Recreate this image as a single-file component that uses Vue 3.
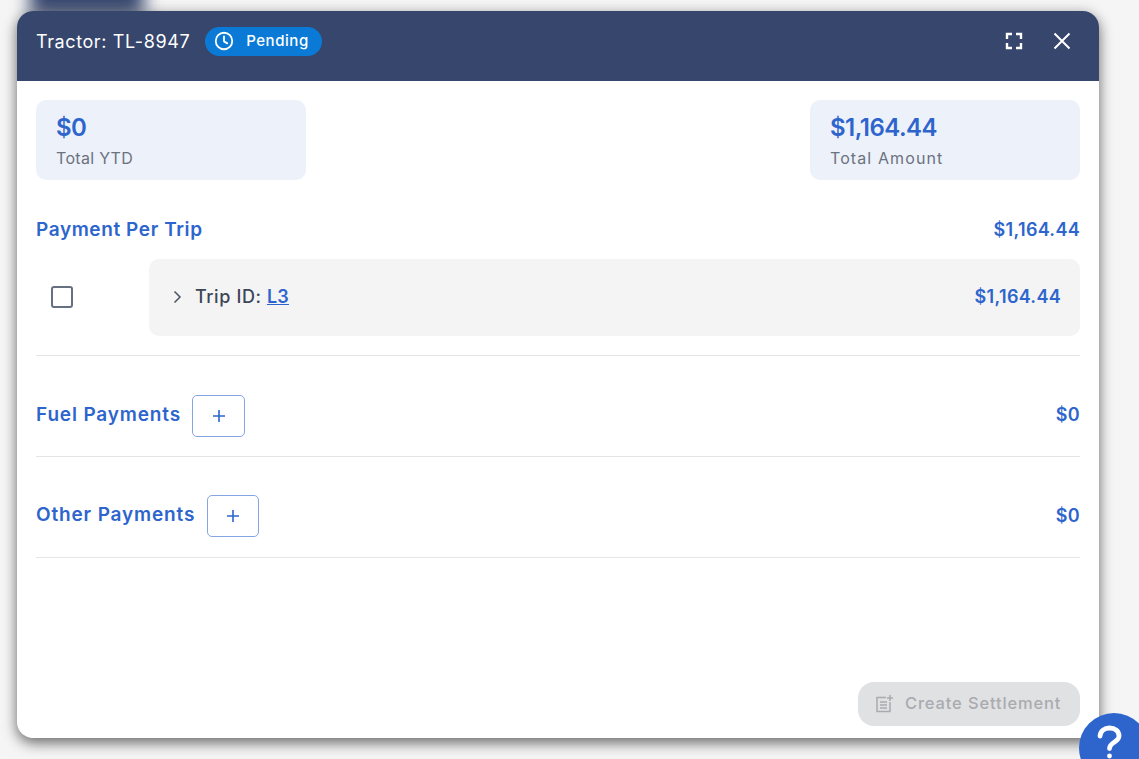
<script setup>
const sections = [
  { title: 'Fuel Payments', amount: '$0', cls: 'fuel' },
  { title: 'Other Payments', amount: '$0', cls: 'other' }
]
</script>

<template>
  <div class="page">
    <div class="blur-bar"></div>
    <div class="modal">
      <header class="head">
        <span class="title">Tractor: TL-8947</span>
        <span class="pill">
          <svg width="22" height="22" viewBox="0 0 24 24" fill="none" stroke="#fff" stroke-width="2" stroke-linecap="round" stroke-linejoin="round"><circle cx="12" cy="12" r="9"/><path d="M12 7v5.4l3.6 2.2"/></svg>
          <span class="pill-text">Pending</span>
        </span>
        <span class="spacer"></span>
        <svg class="expand" width="24" height="24" viewBox="0 0 24 24" fill="none" stroke="#fff" stroke-width="2.4"><path d="M5 10V5h5M14 5h5v5M19 14v5h-5M10 19H5v-5"/></svg>
        <svg class="close" width="24" height="24" viewBox="0 0 24 24" fill="none" stroke="#fff" stroke-width="2"><path d="M4.500 4.500l15 15M19.500 4.500l-15 15"/></svg>
      </header>
      <main class="body">
        <div class="stats">
          <div class="stat"><div class="val">$0</div><div class="lab ytd">Total YTD</div></div>
          <div class="stat"><div class="val">$1,164.44</div><div class="lab amt">Total Amount</div></div>
        </div>
        <div class="rowhead">
          <span class="sect head-sect">Payment Per Trip</span>
          <span class="money">$1,164.44</span>
        </div>
        <div class="trip-row">
          <div class="check-col"><span class="check"></span></div>
          <div class="trip">
            <svg width="18" height="18" viewBox="0 0 18 18" fill="none" stroke="#4b5563" stroke-width="1.5"><path d="M6.500 3.500L12 9l-5.500 5.500"/></svg>
            <span class="trip-label">Trip ID: <a class="trip-link">L3</a></span>
            <span class="spacer"></span>
            <span class="money">$1,164.44</span>
          </div>
        </div>
        <div v-for="s in sections" :key="s.title" class="pay" :class="s.cls">
          <span class="sect lift">{{ s.title }}</span>
          <button class="add">
            <svg width="16" height="16" viewBox="0 0 16 16" fill="none" stroke="#2d65cd" stroke-width="1.6"><path d="M8 2v12M2 8h12"/></svg>
          </button>
          <span class="spacer"></span>
          <span class="money amount">{{ s.amount }}</span>
        </div>
        <div class="grow"></div>
        <div class="foot">
          <button class="create">
            <svg width="22" height="22" viewBox="0 0 22 22" fill="none" stroke="#a9abb0" stroke-width="1.5"><path d="M13 4.500H4v14h13V9"/><path d="M7 9h7M7 12h7M7 15h7"/><path d="M17 2v6M14 5h6"/></svg>
            <span class="create-text">Create Settlement</span>
          </button>
        </div>
      </main>
    </div>
    <div class="help">
      <svg width="36" height="36" viewBox="0 0 36 36" fill="none" stroke="#fff" stroke-width="4.800" stroke-linecap="round"><path d="M8 13c.5-5 4.500-8 9.500-8 5.500 0 9.500 3.200 9.500 8 0 6.500-9.500 6-9.500 12.500"/><path d="M17.500 33v.1"/></svg>
    </div>
  </div>
</template>

<style>
html, body { margin: 0; background: #f5f5f5; overflow: hidden; }
</style>

<style scoped>
.page {
  width: 1139px; height: 759px; position: relative; overflow: hidden; background: #f5f5f5;
  font-family: Inter, "Open Sans", sans-serif;
  padding: 11px 0 0 17px; box-sizing: border-box;
}
.blur-bar {
  position: absolute; left: 30px; top: -30px; width: 114px; height: 46px;
  background: #36466d; filter: blur(9px);
}
.modal {
  position: relative;
  width: 1082px; height: 727px; border-radius: 16px; background: #fff;
  box-shadow: 0 5px 14px rgba(0,0,0,.55), 0 0 14px rgba(0,0,0,.06);
  display: flex; flex-direction: column; overflow: hidden;
}
.head {
  height: 70px; flex: none; background: #36466d; color: #fff;
  display: flex; align-items: center; padding: 0 25px 10px 19px; box-sizing: border-box;
}
.title { font-size: 18px; font-weight: 400; letter-spacing: .6px; color: #fff; }
.pill {
  margin-left: 15px; height: 29px; width: 117px; border-radius: 15px; background: #0a7ad6;
  display: flex; align-items: center; box-sizing: border-box; padding-left: 8px; gap: 11px;
  font-size: 15px; font-weight: 500; color: #fff;
}
.pill-text { letter-spacing: .55px; margin-top: -2px; }
.spacer { flex: 1; }
.close { margin-left: 24px; }
.body {
  flex: 1; display: flex; flex-direction: column; padding: 19px 19px 12px; min-height: 0;
}
.stats { display: flex; justify-content: space-between; }
.stat {
  width: 270px; height: 80px; border-radius: 10px; background: #edf1fa;
  box-sizing: border-box; padding: 13px 20px 0;
}
.val { font-size: 24px; font-weight: 600; line-height: 29px; letter-spacing: -.5px; color: #2d65cd; }
.lab { font-size: 16px; line-height: 24px; margin-top: 4px; color: #6b7280; }
.ytd { letter-spacing: .3px; }
.amt { letter-spacing: 1.1px; }
.rowhead {
  display: flex; justify-content: space-between; align-items: center; height: 28px; margin-top: 35px;
}
.sect { font-size: 19px; font-weight: 600; color: #2d65cd; letter-spacing: .85px; }
.head-sect { letter-spacing: .6px; }
.money { font-size: 18px; font-weight: 600; color: #2d65cd; letter-spacing: .3px; }
.lift { padding-bottom: 3px; }
.fuel .amount { padding-bottom: 3px; }
.other .amount { padding-bottom: 2px; }
.trip-row { display: flex; margin-top: 16px; height: 97px; border-bottom: 1px solid #e5e5e5; box-sizing: border-box; padding-bottom: 19px; }
.check-col { width: 113px; display: flex; align-items: center; padding: 0 0 2px 15px; box-sizing: border-box; }
.check { width: 18px; height: 18px; border: 2px solid #667080; border-radius: 3px; }
.trip {
  flex: 1; height: 77px; background: #f4f4f4; border-radius: 10px; display: flex; align-items: center;
  padding: 0 19px 2px 19px; box-sizing: border-box; gap: 9px;
}
.trip-label { font-size: 18px; font-weight: 500; letter-spacing: .6px; color: #3c4656; }
.trip-link { color: #2d65cd; text-decoration: underline; font-weight: 600; letter-spacing: .2px; }
.pay {
  display: flex; align-items: center; height: 101px; box-sizing: border-box; border-bottom: 1px solid #e5e5e5;
}
.fuel { padding: 39px 0 19px; }
.other { padding: 38px 0 20px; }
.add {
  height: 42px; border: 1px solid #84a4e4; border-radius: 5px; background: #fff; padding: 0;
  display: flex; align-items: center; justify-content: center;
}
.fuel .add { width: 53px; margin-left: 11px; }
.other .add { width: 52px; margin-left: 12px; }
.grow { flex: 1; }
.foot { display: flex; justify-content: flex-end; }
.create {
  width: 222px; height: 44px; border: 0; border-radius: 16px; background: #e0e1e3; color: #a9abb0;
  display: flex; align-items: center; padding: 0 0 0 15px; box-sizing: border-box; gap: 10px;
  font-family: inherit; font-size: 16.500px; font-weight: 500; letter-spacing: .85px;
}
.create-text { margin-top: -2px; }
.help {
  position: absolute; left: 1079px; top: 713px; width: 70px; height: 70px; border-radius: 50%; background: #2d65cd;
  display: flex; justify-content: flex-start; align-items: flex-start; padding: 10px 0 0 13px; box-sizing: border-box;
}
</style>
